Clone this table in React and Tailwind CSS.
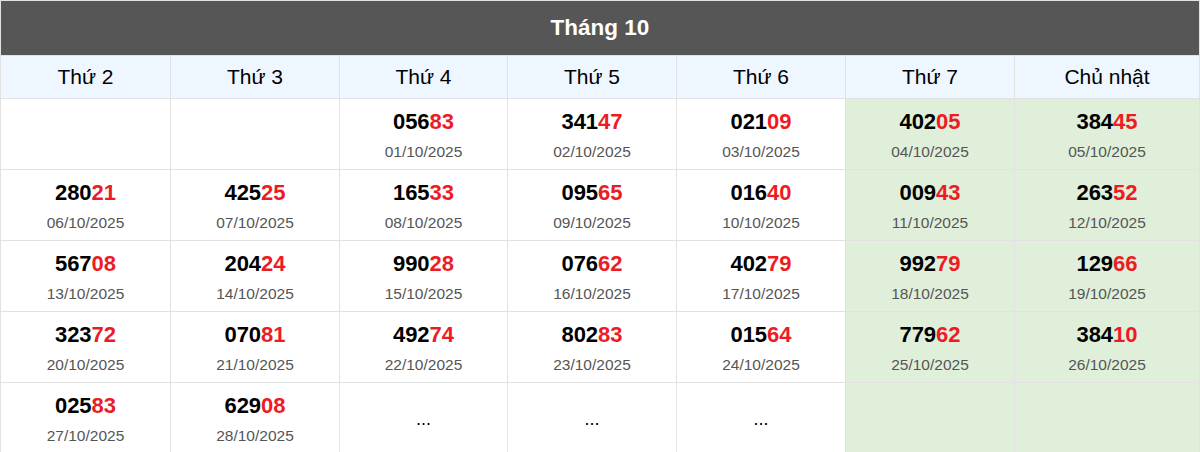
const weekdays = ["Thứ 2", "Thứ 3", "Thứ 4", "Thứ 5", "Thứ 6", "Thứ 7", "Chủ nhật"];

const results = [
  [null, null, ["05683", "01/10/2025"], ["34147", "02/10/2025"], ["02109", "03/10/2025"], ["40205", "04/10/2025"], ["38445", "05/10/2025"]],
  [["28021", "06/10/2025"], ["42525", "07/10/2025"], ["16533", "08/10/2025"], ["09565", "09/10/2025"], ["01640", "10/10/2025"], ["00943", "11/10/2025"], ["26352", "12/10/2025"]],
  [["56708", "13/10/2025"], ["20424", "14/10/2025"], ["99028", "15/10/2025"], ["07662", "16/10/2025"], ["40279", "17/10/2025"], ["99279", "18/10/2025"], ["12966", "19/10/2025"]],
  [["32372", "20/10/2025"], ["07081", "21/10/2025"], ["49274", "22/10/2025"], ["80283", "23/10/2025"], ["01564", "24/10/2025"], ["77962", "25/10/2025"], ["38410", "26/10/2025"]],
  [["02583", "27/10/2025"], ["62908", "28/10/2025"], "dots", "dots", "dots", null, null],
];

const Cell = ({ value, weekend }) => (
  <div
    className={`h-[70px] flex flex-col items-center ${
      weekend ? "bg-[#e0efda]" : "bg-white"
    }`}
  >
    {Array.isArray(value) && (
      <>
        <p className="mt-[9px] h-7 leading-7 text-[22px] font-bold text-black">
          {value[0].slice(0, 3)}
          <span className="text-[#ed1c24]">{value[0].slice(3)}</span>
        </p>
        <p className="mt-[6px] leading-5 text-[15.5px] text-[#555]">{value[1]}</p>
      </>
    )}
    {value === "dots" && (
      <p className="mt-6 leading-6 text-[18px] text-black">...</p>
    )}
  </div>
);

const App = () => {
  return (
    <div className="w-[1200px] h-[452px] overflow-hidden bg-white font-['Liberation_Sans',Arial,sans-serif]">
      <div className="border border-[#e2e2e2] bg-[#e2e2e2]">
        {/* Title */}
        <div className="h-[54px] bg-[#565656] flex items-center justify-center">
          <h2 className="text-[22.5px] font-bold text-white">Tháng 10</h2>
        </div>

        {/* Calendar grid */}
        <div className="mt-px grid grid-cols-[169px_168px_167px_168px_168px_168px_1fr] gap-px">
          {weekdays.map((day) => (
            <div
              key={day}
              className="h-[42px] bg-[#eef6ff] flex items-center justify-center text-[21px] text-black"
            >
              {day}
            </div>
          ))}
          {results.map((row, r) =>
            row.map((value, c) => (
              <Cell key={`${r}-${c}`} value={value} weekend={c >= 5} />
            ))
          )}
        </div>
      </div>
    </div>
  );
};

export default App;
